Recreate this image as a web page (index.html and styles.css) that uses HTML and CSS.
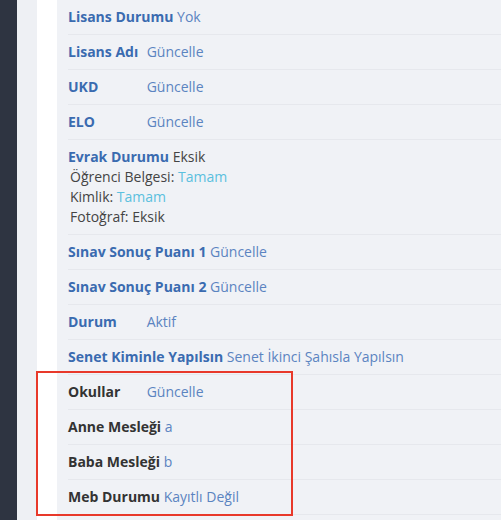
FILE: index.html
```html
<!DOCTYPE html>
<html lang="tr">
<head>
<meta charset="utf-8">
<link rel="stylesheet" href="styles.css">
</head>
<body>
<div class="layout">
  <aside class="sidebar"></aside>
  <main class="content">
    <div class="card">
      <div class="panel">
        <div class="row"><span class="label">Lisans Durumu</span> <span class="val">Yok</span></div>
        <div class="row"><span class="label">Lisans Adı</span> <span class="val">Güncelle</span></div>
        <div class="row"><span class="label">UKD</span> <span class="val">Güncelle</span></div>
        <div class="row"><span class="label">ELO</span> <span class="val">Güncelle</span></div>
        <div class="row">
          <span class="label">Evrak Durumu</span> <span class="plain">Eksik</span>
          <div class="sub">Öğrenci Belgesi: <span class="ok">Tamam</span></div>
          <div class="sub">Kimlik: <span class="ok">Tamam</span></div>
          <div class="sub">Fotoğraf: Eksik</div>
        </div>
        <div class="row"><span class="label">Sınav Sonuç Puanı 1</span> <span class="val">Güncelle</span></div>
        <div class="row"><span class="label">Sınav Sonuç Puanı 2</span> <span class="val">Güncelle</span></div>
        <div class="row"><span class="label">Durum</span> <span class="val">Aktif</span></div>
        <div class="row"><span class="label">Senet Kiminle Yapılsın</span> <span class="val">Senet İkinci Şahısla Yapılsın</span></div>
        <div class="row"><span class="label dark">Okullar</span> <span class="val">Güncelle</span></div>
        <div class="row"><span class="label dark">Anne Mesleği</span> <span class="val">a</span></div>
        <div class="row"><span class="label dark">Baba Mesleği</span> <span class="val">b</span></div>
        <div class="row"><span class="label dark">Meb Durumu</span> <span class="val">Kayıtlı Değil</span></div>
      </div>
    </div>
  </main>
</div>
<div class="highlight"></div>
</body>
</html>
```
FILE: styles.css
```css
html, body {
  margin: 0;
  padding: 0;
  height: 100%;
  overflow: hidden;
}
body {
  font-family: "Open Sans", "Liberation Sans", sans-serif;
  font-size: 14px;
  line-height: 20px;
  color: #444;
  background: #eef0f4;
}
.layout {
  display: flex;
  min-height: 100%;
}
.sidebar {
  width: 17px;
  flex: none;
  background: #2e3441;
}
.content {
  flex: 1;
  padding: 0 0 0 20px;
  background: #eef0f4;
}
.card {
  background: #fff;
  padding: 0 0 0 20px;
  height: 100%;
}
.panel {
  background: #f0f2f6;
  padding: 0 0 0 11px;
  height: 100%;
}
.row {
  padding: 7px 0;
  border-bottom: 1px solid #e6e8ed;
}
.label {
  display: inline-block;
  min-width: 75px;
  font-weight: 700;
  color: #3a6bb0;
}
.label.dark {
  color: #333;
}
.val {
  color: #5b84c1;
}
.plain {
  color: #444;
}
.ok {
  color: #5bc0de;
}
.sub {
  padding-left: 2px;
  color: #444;
}
.highlight {
  position: absolute;
  left: 36px;
  top: 371px;
  width: 253px;
  height: 141px;
  border: 2px solid #e8392a;
}
```
